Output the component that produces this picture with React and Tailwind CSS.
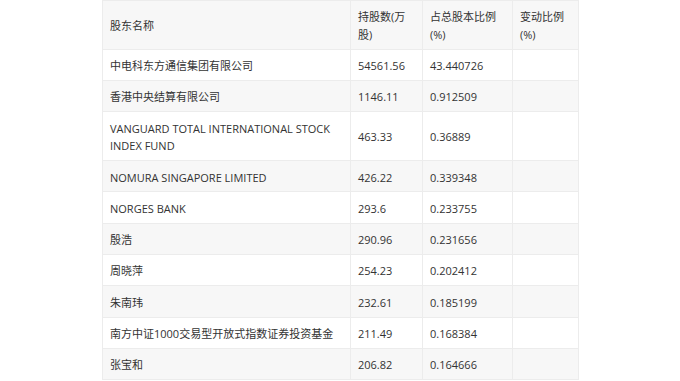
import React from "react";

const rows = [
  ["中电科东方通信集团有限公司", "54561.56", "43.440726", ""],
  ["香港中央结算有限公司", "1146.11", "0.912509", ""],
  ["VANGUARD TOTAL INTERNATIONAL STOCK INDEX FUND", "463.33", "0.36889", ""],
  ["NOMURA SINGAPORE LIMITED", "426.22", "0.339348", ""],
  ["NORGES BANK", "293.6", "0.233755", ""],
  ["殷浩", "290.96", "0.231656", ""],
  ["周晓萍", "254.23", "0.202412", ""],
  ["朱南玮", "232.61", "0.185199", ""],
  ["南方中证1000交易型开放式指数证券投资基金", "211.49", "0.168384", ""],
  ["张宝和", "206.82", "0.164666", ""],
];

export default function App() {
  return (
    <div
      className="w-[680px] h-[381px] bg-white overflow-hidden"
      style={{ fontFamily: '"Open Sans", "Noto Sans CJK SC", sans-serif' }}
    >
      <table className="ml-[102px] border-collapse table-fixed w-[476px] text-[11px] leading-[17.5px] text-[#333]">
        <colgroup>
          <col className="w-[248px]" />
          <col className="w-[72px]" />
          <col className="w-[90px]" />
          <col className="w-[66px]" />
        </colgroup>
        <thead>
          <tr className="bg-[#f7f7f7]">
            <th className="border border-[#ececec] px-[7px] pt-[7.4px] pb-[5.4px] text-left font-normal align-middle">股东名称</th>
            <th className="border border-[#ececec] px-[7px] pt-[7.4px] pb-[5.4px] text-left font-normal align-middle">持股数(万股)</th>
            <th className="border border-[#ececec] px-[7px] pt-[7.4px] pb-[5.4px] text-left font-normal align-middle">占总股本比例(%)</th>
            <th className="border border-[#ececec] px-[7px] pt-[7.4px] pb-[5.4px] text-left font-normal align-middle">变动比例(%)</th>
          </tr>
        </thead>
        <tbody>
          {rows.map((r, i) => (
            <tr key={i} className={i % 2 === 0 ? "bg-white" : "bg-[#f7f7f7]"}>
              {r.map((c, j) => (
                <td key={j} className="border border-[#ececec] px-[7px] pt-[7.4px] pb-[5.4px] align-middle">
                  {c}
                </td>
              ))}
            </tr>
          ))}
        </tbody>
      </table>
    </div>
  );
}
